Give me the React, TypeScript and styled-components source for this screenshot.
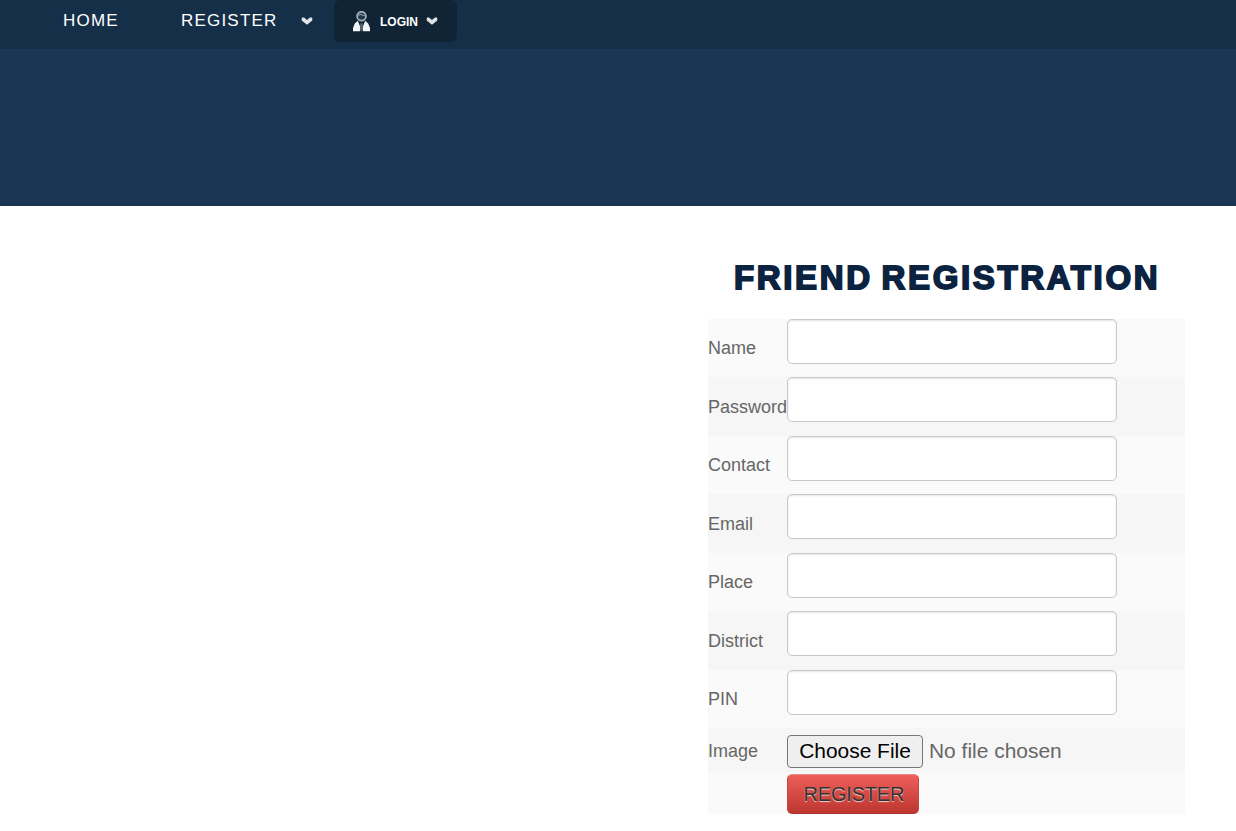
import React from "react";
import styled, { createGlobalStyle } from "styled-components";

const GlobalStyle = createGlobalStyle`
  body { margin: 0; background: #fff; color: #666; overflow: hidden; font-family: "Liberation Sans", Arial, sans-serif; }
  * { box-sizing: border-box; }
`;

const Nav = styled.nav`
  display: flex;
  align-items: flex-start;
  height: 49px;
  padding-left: 63px;
  background: #162f48;
`;

const NavLink = styled.a<{ $width: number }>`
  display: flex;
  width: ${(p) => p.$width}px;
  height: 41px;
  align-items: center;
  color: #fff;
  font-size: 17px;
  line-height: 20px;
  letter-spacing: 1.2px;
  white-space: nowrap;
`;

const LinkText = styled.span<{ $width: number }>`
  width: ${(p) => p.$width}px;
`;

const LoginButton = styled.a`
  display: flex;
  align-items: center;
  width: 123px;
  height: 42px;
  padding-left: 18px;
  border-radius: 6px;
  background: #102436;
  color: #fff;
  font-size: 12px;
  font-weight: 700;
`;

const LoginText = styled.span`
  width: 46px;
  margin-left: 9px;
  padding-top: 1px;
`;

const Banner = styled.header`
  height: 157px;
  background: #1a3654;
  border-bottom: 2px solid #193350;
`;

const Registration = styled.main`
  width: 477px;
  margin-left: 708px;
  padding-top: 52px;
`;

const Title = styled.h1`
  margin: 0 0 21px 26px;
  height: 40px;
  color: #0b2340;
  font-family: "Liberation Sans", Arial, sans-serif;
  font-size: 33px;
  font-weight: 700;
  line-height: 40px;
  letter-spacing: 2.65px;
  word-spacing: -3px;
  -webkit-text-stroke: 1.8px #0b2340;
  white-space: nowrap;
`;

const Row = styled.div<{ $shade?: boolean; $height: number }>`
  display: flex;
  align-items: flex-start;
  height: ${(p) => p.$height}px;
  background: ${(p) => (p.$shade ? "#f6f6f6" : "#fafafa")};
`;

const Label = styled.label<{ $top: number }>`
  flex: 0 0 79px;
  padding-top: ${(p) => p.$top}px;
  font-size: 18px;
  line-height: 20px;
`;

const Input = styled.input`
  width: 330px;
  height: 45px;
  border: 1px solid #c8c8c8;
  border-radius: 5px;
  background: #fff;
  box-shadow: inset 0 1px 2px rgba(0, 0, 0, 0.1);
  outline: none;
`;

const FilePicker = styled.div`
  display: flex;
  align-items: center;
  gap: 6px;
  height: 33px;
  margin-top: 6.5px;
  font-size: 20.95px;
  line-height: 24px;
  white-space: nowrap;
`;

const FileText = styled.span`
  padding-bottom: 1px;
`;

const FileButton = styled.button`
  width: 136px;
  height: 33px;
  padding: 0 0 1px;
  border: 1px solid #767676;
  border-radius: 4px;
  background: #efefef;
  color: #000;
  font: inherit;
`;

const Submit = styled.button`
  width: 132px;
  height: 40px;
  margin: 1px 0 0 79.4px;
  padding: 0 0 0 1px;
  border: 1px solid;
  border-color: #e58a87 #c84642 #a93632;
  border-radius: 5px;
  background: linear-gradient(#ee5f5b, #bd362f);
  color: #333;
  font: 20px "Liberation Sans", Arial, sans-serif;
  letter-spacing: -0.2px;
  text-shadow: 0 1px 1px rgba(255, 255, 255, 0.75);
`;

function Chevron() {
  return (
    <svg width="12" height="10" viewBox="0 0 12 10">
      <path d="M1.2 1.6h1.9L6 4.1l2.9-2.5h1.9l.5.8v2L6 8.8.7 4.4v-2z" fill="#dfe4e9" />
    </svg>
  );
}

function UserIcon() {
  return (
    <svg width="19" height="21" viewBox="0 0 19 21">
      <circle cx="9.5" cy="5.2" r="4.4" fill="#26394a" stroke="#a6b0b9" strokeWidth="1.8" />
      <path d="M6.2 4.6Q8 2.8 9.6 3.8t3.2.4" fill="none" stroke="#8594a1" strokeWidth="1.2" />
      <path d="M5.8 9.8 2.8 12.5 1 17v3.3h6.8l.8-3.5zM13.2 9.8l3 2.7L18 17v3.3h-6.8l-.8-3.5z" fill="#f3f6f8" />
      <path d="m8.5 11.5 1 1.5 1-1.5.6 5-.6 3.8h-2l-.6-3.8z" fill="#53616d" />
    </svg>
  );
}

const fields = ["Name", "Password", "Contact", "Email", "Place", "District", "PIN"];

export default function App() {
  return (
    <>
      <GlobalStyle />
      <Nav>
        <NavLink $width={118}>HOME</NavLink>
        <NavLink $width={153}>
          <LinkText $width={120}>REGISTER</LinkText>
          <Chevron />
        </NavLink>
        <LoginButton>
          <UserIcon />
          <LoginText>LOGIN</LoginText>
          <Chevron />
        </LoginButton>
      </Nav>
      <Banner />
      <Registration>
        <Title>FRIEND REGISTRATION</Title>
        {fields.map((name, i) => (
          <Row key={name} $height={58.48} $shade={i % 2 === 1}>
            <Label $top={19.3} htmlFor={name}>{name}</Label>
            <Input id={name} type={name === "Password" ? "password" : "text"} />
          </Row>
        ))}
        <Row $height={45} $shade>
          <Label $top={12.6}>Image</Label>
          <FilePicker>
            <FileButton type="button">Choose File</FileButton>
            <FileText>No file chosen</FileText>
          </FilePicker>
        </Row>
        <Row $height={41}>
          <Submit type="button">REGISTER</Submit>
        </Row>
      </Registration>
    </>
  );
}
